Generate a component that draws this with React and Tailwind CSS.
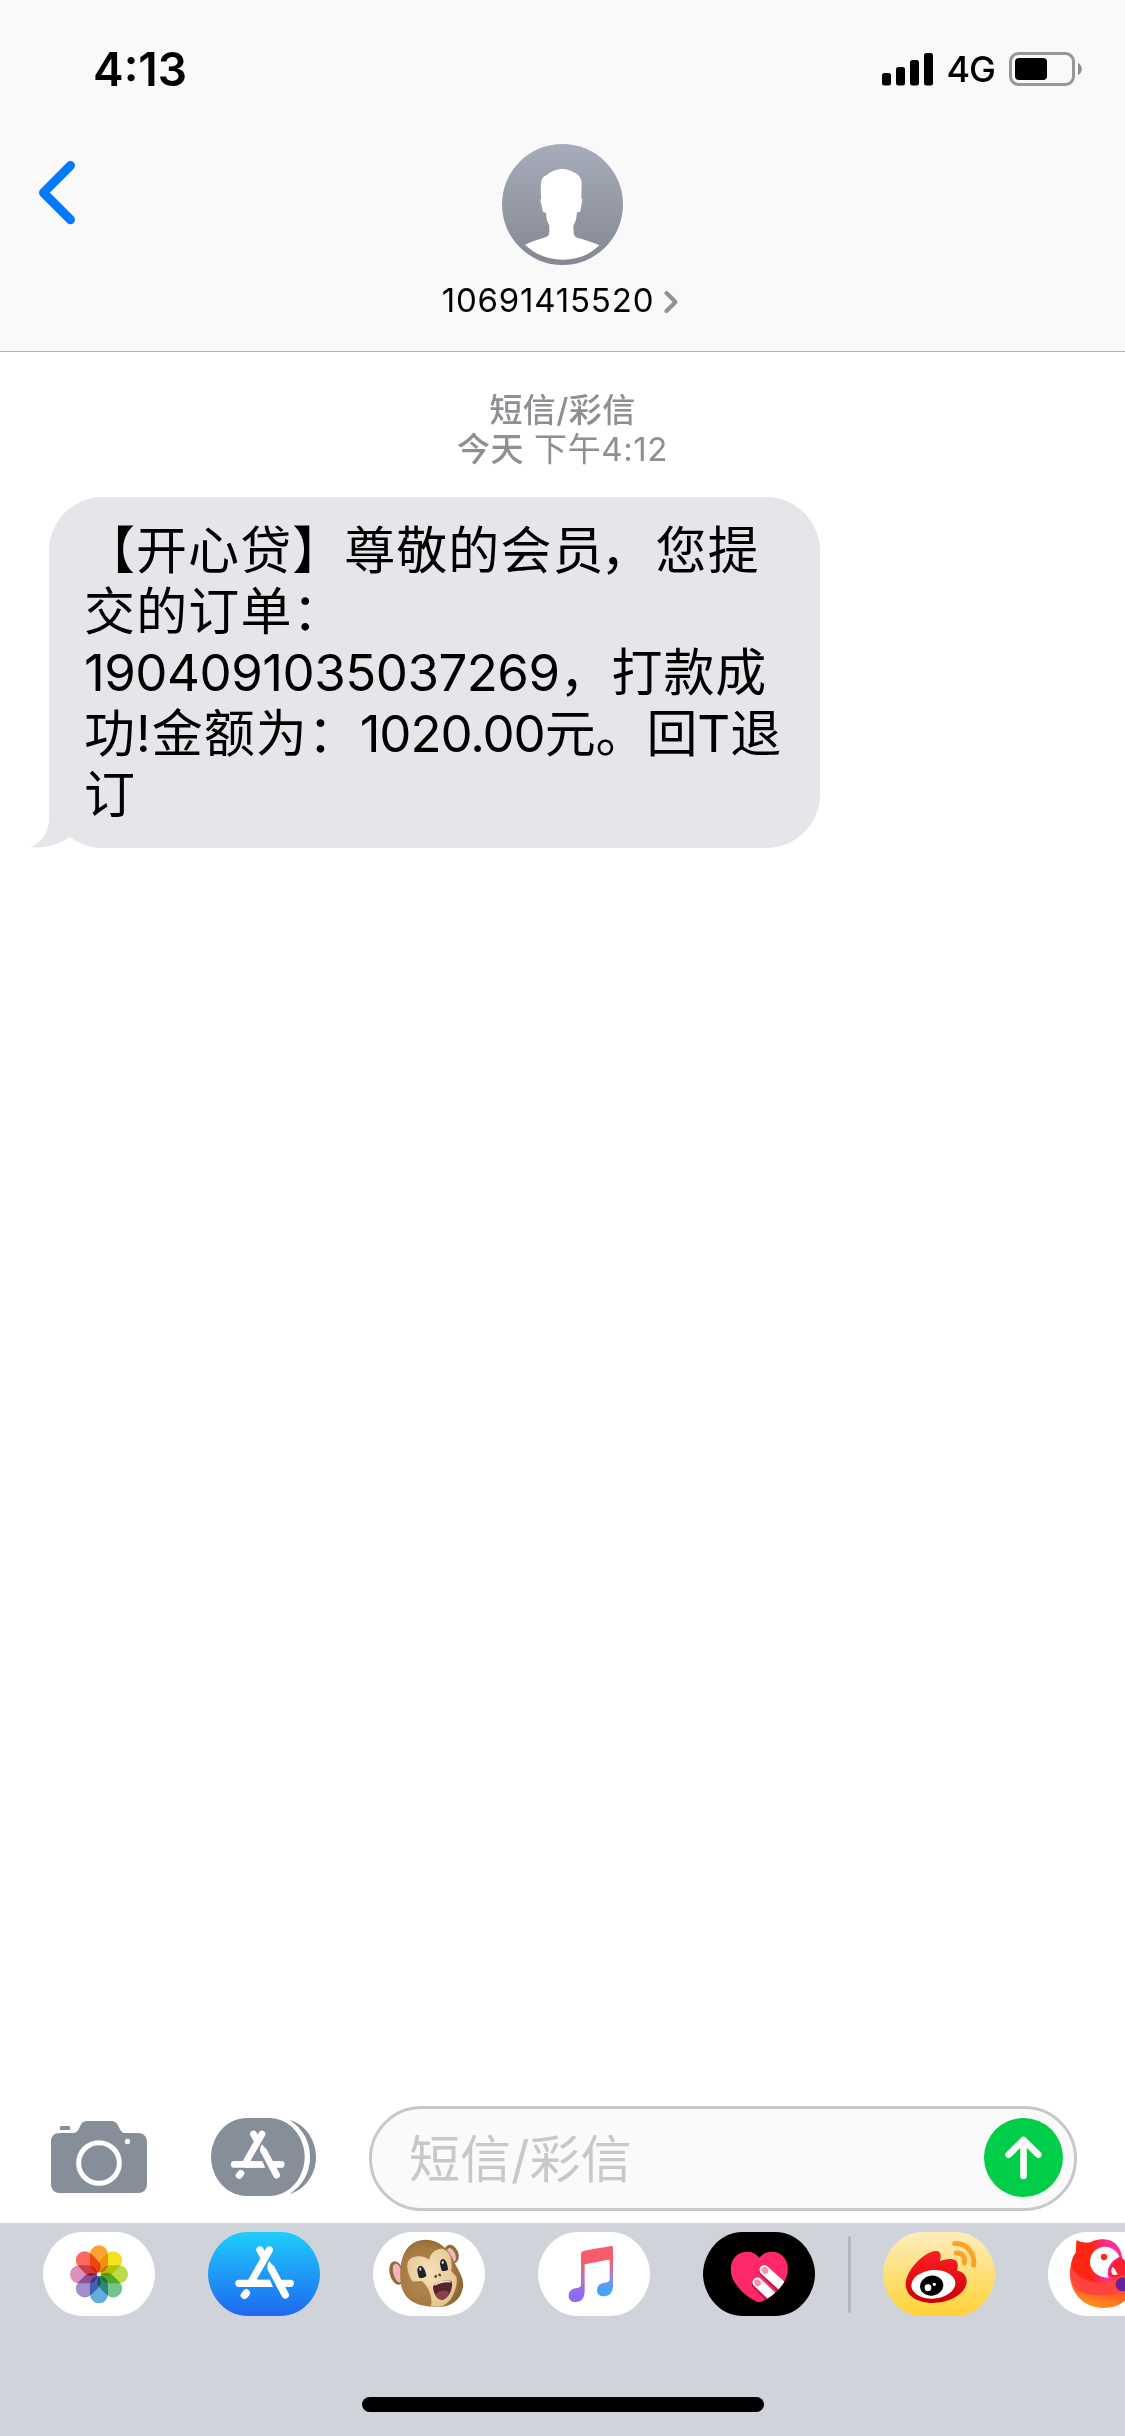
const messageLines = [
  [
    { text: '【开心贷】尊敬的会员', className: 'tracking-[1.05px]' },
    { text: '，', className: '-ml-[4px] mr-[4px]' },
    { text: '您提', className: 'tracking-[1.15px]' },
  ],
  [{ text: '交的订单：', className: 'tracking-[1.15px]' }],
  [
    { text: '1904091035037269', className: 'tracking-[-0.5px]' },
    { text: '，打款成', className: 'tracking-[0.9px]' },
  ],
  [
    { text: '功!金额为：', className: 'tracking-[1px]' },
    { text: '1020.00', className: 'tracking-[-1.1px]' },
    { text: '元。回T退', className: 'tracking-[-0.1px]' },
  ],
  [{ text: '订', className: '' }],
];

const PILL = 'M118 0 H218 C288 0 336 66 336 126 C336 186 288 252 218 252 H118 C48 252 0 186 0 126 C0 66 48 0 118 0 Z';

const SignalIcon = () => (
  <svg className="h-[33px] w-[52px]" viewBox="0 0 52 33">
    <rect x="0" y="20" width="9" height="12.5" rx="2.5" />
    <rect x="14" y="14" width="9" height="18.5" rx="2.5" />
    <rect x="28" y="7" width="9" height="25.5" rx="2.5" />
    <rect x="42" y="0" width="9" height="32.5" rx="2.5" />
  </svg>
);

const BatteryIcon = () => (
  <svg className="h-[34px] w-[74px]" viewBox="0 0 74 34">
    <rect x="1.5" y="1.5" width="63" height="31" rx="8" fill="none" stroke="#979797" strokeWidth="3" />
    <rect x="6" y="6" width="32" height="22" rx="4" />
    <path d="M69 11 C74 13 74 21 69 23 Z" fill="#8c8c8c" />
  </svg>
);

const Avatar = () => (
  <svg className="h-[121px] w-[121px]" viewBox="0 0 363 363">
    <defs>
      <linearGradient id="avatar" x1="0" y1="0" x2="0" y2="1">
        <stop offset="0" stopColor="#a6acba" />
        <stop offset="1" stopColor="#848891" />
      </linearGradient>
    </defs>
    <circle cx="181.500" cy="181.500" r="181.500" fill="url(#avatar)" />
    <path
      d="M182 75 C192 75 205 79 213 84 C228 89 236 98 239 114 L238 163 L241 166 L236 198 L233 204 L225 205 C223 220 223 232 214 244 L215 268 C216 276 220 280 228 282 C250 288 275 296 292 304 C262 334 224 347 182 347 C139 347 101 332 69 302 C88 292 112 286 132 279 C140 276 142 272 142 264 L142 244 C135 234 133 222 132 206 L123 204 L115 168 L118 164 C116 144 115 128 118 112 C121 100 126 97 133 94 C145 83 165 75 182 75 Z"
      fill="#fff"
    />
  </svg>
);

const CameraIcon = () => (
  <svg className="h-[72px] w-[96px]" viewBox="0 0 288 216">
    <path
      d="M27 18 Q27 15 31 15 H53 Q57 15 57 19 V27 H27 Z M28 36 H66 C76 36 81 30 85 21 C90 8 94 0 112 0 H180 C194 0 199 8 205 21 C210 31 213 36 222 36 H258 C278 36 288 46 288 64 V188 C288 206 278 216 258 216 H30 C10 216 0 206 0 188 V64 C0 46 8 36 28 36 Z"
      fill="#868e99"
    />
    <circle cx="144" cy="126" r="61" fill="none" stroke="#fff" strokeWidth="15" />
    <circle cx="229.500" cy="61.500" r="8" fill="#fff" />
  </svg>
);

const StoreGlyph = () => (
  <g fill="none" stroke="#fff" strokeWidth="22" strokeLinecap="round">
    <path d="M184 54 L131 147" />
    <path d="M156 54 L166 72" />
    <path d="M93 154 H150" />
    <path d="M130 154 H186" strokeLinecap="butt" />
    <path d="M186 144 L195 165 H178 Z" fill="#fff" stroke="none" />
    <path d="M225 154 H247" />
    <path d="M190 110 L232 189" />
    <path d="M184 88 C177 96 177 106 181 116 L199 106 Z" fill="#fff" stroke="none" />
    <path d="M115 183 L109 190" />
  </g>
);

const AppDrawerIcon = () => (
  <svg className="h-[78px] w-[106px]" viewBox="0 0 318 234">
    <path d="M108 0 H174 C240 0 281 60 281 117 C281 174 240 234 174 234 H108 C42 234 0 174 0 117 C0 60 42 0 108 0 Z" fill="#868e99" />
    <path d="M236 6 C284 20 315 66 315 117 C315 168 284 214 236 228 C276 202 297 163 297 117 C297 71 276 32 236 6 Z" fill="#868e99" />
    <g transform="translate(-15.500 -1.500) scale(0.915)">
      <StoreGlyph />
    </g>
  </svg>
);

const SendIcon = () => (
  <svg className="h-[79px] w-[79px]" viewBox="0 0 237 237">
    <circle cx="118.500" cy="118.500" r="118.500" fill="#00cd48" />
    <path d="M118.500 174 V66 M74 110 L118.500 66 L163 110" fill="none" stroke="#fafafa" strokeWidth="20" strokeLinecap="round" strokeLinejoin="round" />
  </svg>
);

const Pill = ({ fill, children }) => (
  <svg className="h-[84px] w-[112px] shrink-0" viewBox="0 0 336 252">
    <path d={PILL} fill={fill} />
    {children}
  </svg>
);

const petals = [
  ['#f9a431', 0],
  ['#f5e120', 45],
  ['#bedb4c', 90],
  ['#71c58c', 135],
  ['#64addf', 180],
  ['#a78ccb', 225],
  ['#d890bc', 270],
  ['#f96a60', 315],
];

const PhotosApp = () => (
  <Pill fill="#fff">
    <g transform="translate(168 127)">
      {petals.map(([color, angle]) => (
        <rect
          key={angle}
          x="-27"
          y="-87"
          width="54"
          height="83"
          rx="27"
          fill={color}
          transform={`rotate(${angle})`}
          className="mix-blend-multiply"
        />
      ))}
      <circle r="6" fill="#fff" />
    </g>
  </Pill>
);

const StoreApp = () => (
  <Pill fill="url(#store)">
    <defs>
      <linearGradient id="store" x1="0" y1="0" x2="0" y2="1">
        <stop offset="0" stopColor="#1fcdfb" />
        <stop offset="1" stopColor="#1e68f0" />
      </linearGradient>
    </defs>
    <StoreGlyph />
  </Pill>
);

const MonkeyApp = () => (
  <Pill fill="#fff">
    <defs>
      <radialGradient id="fur" cx="0.4" cy="0.55" r="0.62">
        <stop offset="0" stopColor="#b58a55" />
        <stop offset="0.7" stopColor="#a57a42" />
        <stop offset="1" stopColor="#8a6230" />
      </radialGradient>
      <radialGradient id="face" cx="0.45" cy="0.4" r="0.75">
        <stop offset="0" stopColor="#f6e0b8" />
        <stop offset="1" stopColor="#e0bf8a" />
      </radialGradient>
    </defs>
    <g transform="translate(-69 -426)">
      <ellipse cx="140" cy="549" rx="21" ry="36" fill="#8f6a3a" transform="rotate(-15 140 549)" />
      <ellipse cx="143" cy="549" rx="13" ry="29" fill="#f3b3b8" transform="rotate(-15 143 549)" />
      <ellipse cx="305" cy="492" rx="20" ry="29" fill="#8f6a3a" transform="rotate(-22 305 492)" />
      <ellipse cx="304" cy="495" rx="12" ry="22" fill="#f3b3b8" transform="rotate(-22 304 495)" />
      <path d="M228 449 C268 449 297 478 312 515 C329 547 342 565 339 591 C333 632 301 651 265 651 C240 651 215 648 197 640 C166 626 152 600 151 563 C149 531 154 504 165 485 C178 461 202 449 228 449 Z" fill="url(#fur)" />
      <path d="M186 573 C172 550 166 521 179 508 C193 495 220 497 238 509 C240 490 260 473 279 477 C301 484 307 508 304 538 C303 548 313 552 319 560 C321 570 321 580 318 591 C309 624 290 648 270 650 C258 650 248 650 243 648 C249 622 236 592 219 575 C206 570 196 578 186 573 Z" fill="url(#face)" />
      <path d="M203 548 C200 536 205 527 212 527 C222 530 227 544 229 558 C222 565 210 565 207 563 Z" fill="#1f2428" />
      <path d="M271 527 C268 515 273 506 280 507 C289 510 293 525 294 539 C288 544 279 543 275 542 Z" fill="#1f2428" />
      <ellipse cx="211" cy="537" rx="3" ry="5" fill="#dfe2e5" />
      <ellipse cx="278" cy="517" rx="3" ry="5" fill="#dfe2e5" />
      <ellipse cx="257" cy="559" rx="4" ry="5" fill="#6f4520" transform="rotate(20 257 559)" />
      <ellipse cx="269" cy="555" rx="4" ry="5" fill="#6f4520" transform="rotate(-40 269 555)" />
      <path d="M249 590 C258 574 288 566 304 573 C311 588 300 622 279 629 C262 632 249 609 249 590 Z" fill="#58232a" />
      <path d="M257 614 C266 600 290 598 297 608 C294 618 286 628 277 629 C269 629 262 623 257 614 Z" fill="#84444a" />
      <path d="M255 583 C266 572 290 567 302 573 L301 578 C288 575 268 579 256 587 Z" fill="#e8e0dc" />
    </g>
  </Pill>
);

const MusicApp = () => (
  <Pill fill="#fff">
    <defs>
      <linearGradient id="music" gradientUnits="userSpaceOnUse" x1="720" y1="515" x2="728" y2="615">
        <stop offset="0" stopColor="#f85c6c" />
        <stop offset="0.45" stopColor="#b873c4" />
        <stop offset="1" stopColor="#8a68f8" />
      </linearGradient>
      <linearGradient id="musicRight" gradientUnits="userSpaceOnUse" x1="775" y1="512" x2="770" y2="600">
        <stop offset="0" stopColor="#f85c6c" />
        <stop offset="0.45" stopColor="#a584cd" />
        <stop offset="1" stopColor="#43a3fc" />
      </linearGradient>
    </defs>
    <g transform="translate(-564 -426)">
      <path d="M693 491 Q693 485 700 483 L742 475 V516 L704 523 V601 C704 624 695 636 677 636 C664 636 656 629 656 617 C656 603 667 595 680 594 C690 593 693 590 693 582 Z" fill="url(#music)" />
      <path d="M741 475.200 L784 468 Q789 467 789 473 V584 C789 607 780 618 762 619 C749 619 741 612 741 600 C741 587 751 579 764 578 C775 577 779 574 779 566 V514 Q779 508 773 509 L741 516 Z" fill="url(#musicRight)" />
    </g>
  </Pill>
);

const HeartApp = () => (
  <Pill fill="#000">
    <defs>
      <clipPath id="heart">
        <path d="M237 503 C218 480 184 481 166 499 C146 519 148 553 162 576 C180 604 206 625 230 635 Q237 638 244 635 C269 624 296 602 312 575 C326 550 328 518 307 498 C289 481 256 480 237 503 Z" />
      </clipPath>
    </defs>
    <g transform="translate(-68 -426)" clipPath="url(#heart)">
      <rect x="145" y="480" width="190" height="165" fill="#ff2968" />
      <g strokeLinecap="round">
        <path d="M250 545 L310 605 M228 584 L285 640" stroke="#c81550" strokeWidth="28" />
        <path d="M252 540 L325 606 M231 577 L300 642" stroke="#fff" strokeWidth="29" />
        <path d="M253 540 L255 543 M231 577 L233 580" stroke="#fc8fb0" strokeWidth="18" />
      </g>
    </g>
  </Pill>
);

const WeiboApp = () => (
  <Pill fill="url(#weibo)">
    <defs>
      <linearGradient id="weibo" x1="0" y1="0" x2="0" y2="1">
        <stop offset="0" stopColor="#fdedbd" />
        <stop offset="1" stopColor="#ffd234" />
      </linearGradient>
      <linearGradient id="weiboRed" x1="0" y1="0" x2="0" y2="1">
        <stop offset="0" stopColor="#ff1f25" />
        <stop offset="1" stopColor="#c90006" />
      </linearGradient>
    </defs>
    <g transform="translate(-609 -426)">
      <path d="M768 483 C783 483 785 497 779 514 C795 506 818 503 829 513 C836 521 833 533 831 541 C848 546 861 557 860 575 C857 613 808 638 757 639 C713 638 678 619 677 583 C678 541 731 485 768 483 Z" fill="url(#weiboRed)" />
      <ellipse cx="760" cy="583" rx="66" ry="43" fill="#fff" transform="rotate(-5 760 583)" />
      <ellipse cx="755" cy="587" rx="35" ry="30" transform="rotate(-10 755 587)" />
      <circle cx="744" cy="593" r="10" fill="#fff" />
      <circle cx="763" cy="583" r="5" fill="#fff" />
      <path d="M829 489 C846 487 857 501 853 519 M824 461 C860 458 885 490 881 526" fill="none" stroke="#ffa126" strokeWidth="15" strokeLinecap="round" />
    </g>
  </Pill>
);

const ParrotApp = () => (
  <Pill fill="#fff">
    <defs>
      <linearGradient id="parrot" x1="0.6" y1="0" x2="0.4" y2="1">
        <stop offset="0" stopColor="#fa2a2a" />
        <stop offset="0.6" stopColor="#ff3f2e" />
        <stop offset="1" stopColor="#ff9418" />
      </linearGradient>
      <linearGradient id="crest" x1="0" y1="0" x2="1" y2="0">
        <stop offset="0.4" stopColor="#ff2712" />
        <stop offset="0.75" stopColor="#fb2cae" />
      </linearGradient>
    </defs>
    <g transform="translate(-1104 -426)">
      <path d="M1190 451 C1203 459 1222 461 1236 455 C1290 434 1325 462 1328 515 C1390 585 1345 654 1272 654 C1210 654 1170 608 1170 552 C1170 526 1177 502 1188 487 Z" fill="url(#parrot)" />
      <path d="M1190 451 C1203 459 1222 461 1236 455 C1280 438 1327 462 1325 516 C1325 560 1290 584 1242 577 C1200 567 1175 545 1174 522 C1177 505 1182 495 1188 487 Z" fill="url(#crest)" />
      <path d="M1173 533 C1195 574 1250 592 1300 571 L1335 550 V600 C1290 625 1220 620 1190 597 C1176 580 1172 555 1173 533 Z" fill="#ff4440" />
      <path d="M1298 563 C1280 562 1278 530 1322 500 L1335 512 V555 Z" fill="#f8222e" />
      <path d="M1318 500 C1308 478 1288 468 1266 471 C1242 476 1228 498 1230 521 C1234 547 1258 562 1286 563 C1278 540 1288 514 1318 500 Z" fill="#fff" />
      <circle cx="1272" cy="501" r="9.500" fill="#fb2b1c" />
      <path d="M1297 531 C1290 546 1295 561 1315 553 C1307 549 1311 539 1297 531 Z" fill="#fff" />
      <circle cx="1328" cy="583" r="21" fill="#67219a" />
    </g>
  </Pill>
);

export default function App() {
  return (
    <div className="flex h-[2436px] w-[1125px] flex-col overflow-hidden bg-white font-['Inter','Noto_Sans_CJK_SC',sans-serif] text-black [text-spacing-trim:space-all]">
      {/* Header */}
      <header className="flex h-[352px] shrink-0 flex-col border-b border-[#b2b2b2] bg-[#f9f9f9]">
        <div className="flex h-[138px] items-center justify-between pr-[42px] pl-[93px]">
          <span className="text-[46px] font-semibold">4:13</span>
          <div className="flex items-center">
            <SignalIcon />
            <span className="ml-[12px] text-[36px] leading-none font-medium tracking-[-1px]">4G</span>
            <span className="ml-[14px]">
              <BatteryIcon />
            </span>
          </div>
        </div>
        <div className="grid grid-cols-3">
          <button className="mt-[22px] ml-[37px] h-[66px] w-[40px]">
            <svg viewBox="0 0 40 66" className="h-full w-full">
              <path d="M33.500 5.500 L6.500 32.700 L33.500 59.800" fill="none" stroke="#007aff" strokeWidth="9" strokeLinecap="round" strokeLinejoin="round" />
            </svg>
          </button>
          <div className="flex flex-col items-center pt-[6px]">
            <Avatar />
            <div className="mt-[15px] flex items-center pr-[4px]">
              <span className="text-[33px] leading-[40px] tracking-[0.8px]">10691415520</span>
              <svg className="mt-1 ml-[10px] h-[24px] w-[15px]" viewBox="0 0 15 24">
                <path d="M2.500 3 L11.500 12 L2.500 21" fill="none" stroke="#8a929d" strokeWidth="4" strokeLinecap="round" strokeLinejoin="round" />
              </svg>
            </div>
          </div>
        </div>
      </header>

      {/* Conversation */}
      <main className="flex grow flex-col items-start">
        <div className="mt-[39px] w-full text-center text-[33px] leading-[39px] text-[#8e8e93]">
          <p className="font-medium tracking-[0.4px]">短信/彩信</p>
          <p className="tracking-[0.6px]">
            <span className="font-medium">今天</span> 下午4:12
          </p>
        </div>
        <div className="relative mt-[28px] ml-[49px] h-[351px] w-[771px] rounded-[54px] bg-[#e5e5ea] px-[35px] py-[23px]">
          <svg className="absolute bottom-0 left-[-18px] h-[60px] w-[60px]" viewBox="0 0 60 60">
            <path d="M18 0 V30 C18 44 11 54 0 59 C14 61 28 56 39 49 L56 40 L40 0 Z" fill="#e5e5ea" />
          </svg>
          <div className="relative">
            {messageLines.map((line, index) => (
              <p key={index} className="h-[61px] text-[51px] leading-[61px] whitespace-nowrap">
                {line.map((part) => (
                  <span key={part.text} className={part.className}>
                    {part.text}
                  </span>
                ))}
              </p>
            ))}
          </div>
        </div>
      </main>

      {/* Compose bar */}
      <div className="flex h-[117px] shrink-0 items-start pl-[51px]">
        <span className="mt-[15px]">
          <CameraIcon />
        </span>
        <span className="mt-[12px] ml-[64px]">
          <AppDrawerIcon />
        </span>
        <div className="ml-[52px] flex h-[105px] w-[708px] items-center justify-between rounded-full border-[3px] border-[#c7c7cc] bg-[#fafafa] pr-[11px] pb-[3px] pl-[37px]">
          <span className="pt-[4px] text-[51px] leading-none text-[#c7c7cc]">短信/彩信</span>
          <SendIcon />
        </div>
      </div>

      {/* App strip */}
      <footer className="flex h-[213px] shrink-0 flex-col items-center bg-[#d0d3da]">
        <div className="flex w-full items-start gap-[53px] pt-[9px] pl-[43px]">
          <PhotosApp />
          <StoreApp />
          <MonkeyApp />
          <MusicApp />
          <HeartApp />
          <div className="mt-[4px] -mr-[21px] -ml-[20px] h-[77px] w-[3px] shrink-0 rounded-full bg-[#b2b5bb]" />
          <WeiboApp />
          <ParrotApp />
        </div>
        <div className="mt-[81px] h-[15px] w-[402px] rounded-full bg-black" />
      </footer>
    </div>
  );
}
